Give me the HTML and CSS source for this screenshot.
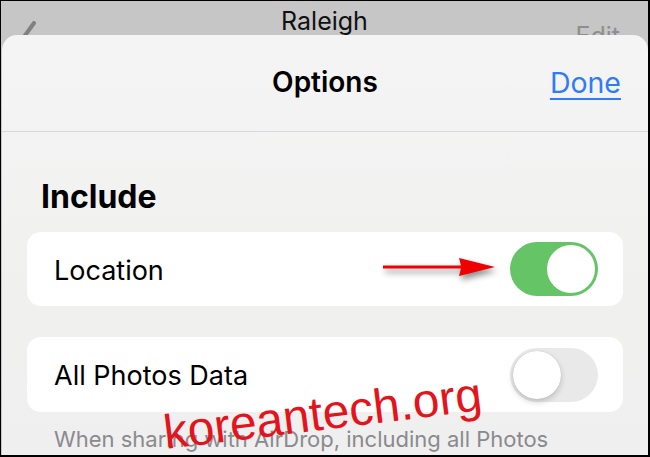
FILE: index.html
```html
<!DOCTYPE html>
<html lang="en">
<head>
    <meta charset="UTF-8">
    <meta name="viewport" content="width=device-width, initial-scale=1.0">
    <title>Options</title>
    <link rel="stylesheet" href="styles.css">
</head>
<body>

    <div class="screen">
        <div class="nav-behind">
            <div class="nav-left">
                <svg class="chevron" width="30" height="30" viewBox="0 0 30 30">
                    <path d="M15 2 L2 20" stroke="#808080" stroke-width="4" stroke-linecap="round" fill="none"/>
                </svg>
            </div>
            <div class="nav-title">Raleigh</div>
            <div class="nav-right">Edit</div>
        </div>

        <div class="sheet">
            <header class="sheet-header">
                <span></span>
                <span class="sheet-title">Options</span>
                <a class="done" href="#">Done</a>
            </header>

            <section class="group">
                <h2>Include</h2>

                <div class="card">
                    <span class="label">Location</span>
                    <svg class="arrow" width="118" height="30" viewBox="0 0 118 30">
                        <path d="M2 9.5 H80 L78 2 L114 11 L78 20 L80 12.5 H2 Z" fill="#f00000"/>
                    </svg>
                    <span class="toggle on"><span class="knob"></span></span>
                </div>

                <div class="card second">
                    <span class="label">All Photos Data</span>
                    <span class="toggle"><span class="knob"></span></span>
                </div>

                <p class="note">When sharing with AirDrop, including all Photos</p>
            </section>
        </div>

        <div class="watermark">koreantech.org</div>
    </div>

</body>
</html>
```

FILE: styles.css
```css
body {
    margin: 0;
    font-family: Inter, "Noto Sans", sans-serif;
}

.screen {
    position: relative;
    width: 650px;
    height: 457px;
    box-sizing: border-box;
    border: 1px solid #000;
    border-right-width: 2px;
    border-bottom-width: 2px;
    background-color: #c6c6c6;
    overflow: hidden;
    display: flex;
    flex-direction: column;
}

/* the page behind the sheet */
.nav-behind {
    height: 34px;
    flex-shrink: 0;
    display: grid;
    grid-template-columns: 1fr auto 1fr;
}

.nav-left {
    padding: 20px 0 0 18px;
    height: 14px;
}

.chevron {
    display: block;
}

.nav-title {
    font-size: 25px;
    color: #111;
    line-height: 28px;
    padding-top: 6px;
}

.nav-right {
    justify-self: end;
    padding: 21px 28px 0 0;
    font-size: 25px;
    line-height: 28px;
    color: #8e8e8e;
    height: 13px;
}

.sheet {
    position: relative;
    flex: 1;
    margin: 0 0 0 1px;
    background: linear-gradient(180deg, #f4f4f4 0%, #f0f1ef 60%, #efefef 100%);
    border-radius: 15px 15px 0 0;
}

.sheet-header {
    height: 97px;
    box-sizing: border-box;
    border-bottom: 1px solid #d9d9d9;
    display: grid;
    grid-template-columns: 1fr auto 1fr;
    align-items: center;
    padding: 0 27px 2px 27px;
}

.sheet-title {
    font-size: 28px;
    font-weight: 600;
    color: #000;
}

.done {
    justify-self: end;
    font-size: 28.5px;
    color: #2f7cf6;
    text-decoration: underline;
    text-underline-offset: 5px;
    text-decoration-thickness: 2px;
}

.group {
    padding: 46px 25px 0 25px;
}

.group h2 {
    margin: 0 0 16px 0;
    padding-left: 14px;
    font-size: 32px;
    font-weight: 700;
    line-height: 38px;
    color: #000;
}

.card {
    height: 74px;
    background-color: #fff;
    border-radius: 14px;
    display: flex;
    align-items: center;
    padding: 0 25px 0 27px;
}

.card.second {
    margin-top: 31px;
    height: 75px;
}

.label {
    flex: 1;
    font-size: 27px;
    color: #000;
    margin-top: 2px;
}

.arrow {
    margin-right: 11px;
    margin-top: 4px;
    filter: drop-shadow(2px 4px 3px rgba(0, 0, 0, 0.45));
}

.toggle {
    position: relative;
    width: 88px;
    height: 54px;
    border-radius: 27px;
    background-color: #e9e9ea;
    display: flex;
    align-items: center;
    padding: 0 3px;
    box-sizing: border-box;
}

.toggle.on {
    background-color: #65c466;
    justify-content: flex-end;
}

.knob {
    width: 48px;
    height: 48px;
    border-radius: 50%;
    background-color: #fff;
    box-shadow: 0 3px 6px rgba(0, 0, 0, 0.18), 0 0 1px rgba(0, 0, 0, 0.2);
}

.toggle.on .knob {
    box-shadow: none;
}

.note {
    margin: 14px 0 0 27px;
    font-size: 22px;
    line-height: 26px;
    color: #8a8a8e;
    white-space: nowrap;
}

.watermark {
    position: absolute;
    left: 166px;
    top: 404px;
    font-family: "Liberation Sans", Arial, sans-serif;
    font-size: 48px;
    color: #e3141c;
    transform: rotate(-7deg);
    transform-origin: left bottom;
    white-space: nowrap;
}
```
